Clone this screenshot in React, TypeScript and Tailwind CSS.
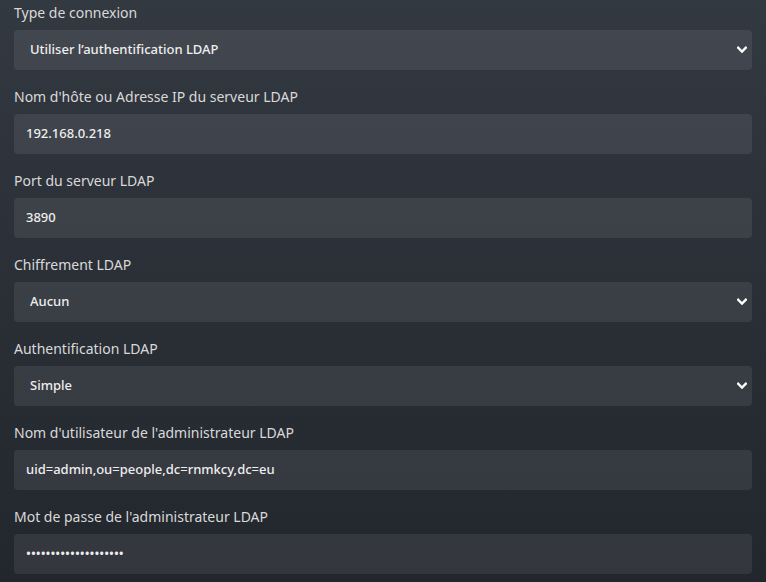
import React from "react";

const Chevron = () => (
  <svg width="10" height="8" viewBox="0 0 10 8" className="shrink-0">
    <path d="M1.2 1.8 L5 5.6 L8.8 1.8" fill="none" stroke="#ffffff" strokeWidth="2.4" strokeLinecap="square" />
  </svg>
);

type F = { label: string; value: string; select?: boolean };

const fields: F[] = [
  { label: "Type de connexion", value: "Utiliser l\u2019authentification LDAP", select: true },
  { label: "Nom d'hôte ou Adresse IP du serveur LDAP", value: "192.168.0.218" },
  { label: "Port du serveur LDAP", value: "3890" },
  { label: "Chiffrement LDAP", value: "Aucun", select: true },
  { label: "Authentification LDAP", value: "Simple", select: true },
  { label: "Nom d'utilisateur de l'administrateur LDAP", value: "uid=admin,ou=people,dc=rnmkcy,dc=eu" },
  { label: "Mot de passe de l'administrateur LDAP", value: "••••••••••••••••••••" },
];

export default function App() {
  return (
    <div
      className="w-[766px] h-[582px] overflow-hidden bg-gradient-to-b from-[#333941] to-[#22262d] px-[14px] pt-[2px]"
      style={{ fontFamily: '"Noto Sans", "Open Sans", sans-serif' }}
    >
      {fields.map((f) => (
        <div key={f.label} className="mb-[16px] pt-[1px]">
          <div className="h-[20px] leading-[20px] text-[14px] text-[#d9d9d9] mb-[7px]">{f.label}</div>
          <div
            className={`h-[40px] rounded-[4px] bg-white/[0.08] flex items-center justify-between text-[13px] font-medium text-[#eeeeee] ${
              f.select ? "pl-[16px] pr-[4px]" : "pl-[12px] pr-[12px]"
            }`}
          >
            <span>{f.value}</span>
            {f.select && (
              <span className="w-[10px] mr-[1px] flex justify-center">
                <Chevron />
              </span>
            )}
          </div>
        </div>
      ))}
    </div>
  );
}
